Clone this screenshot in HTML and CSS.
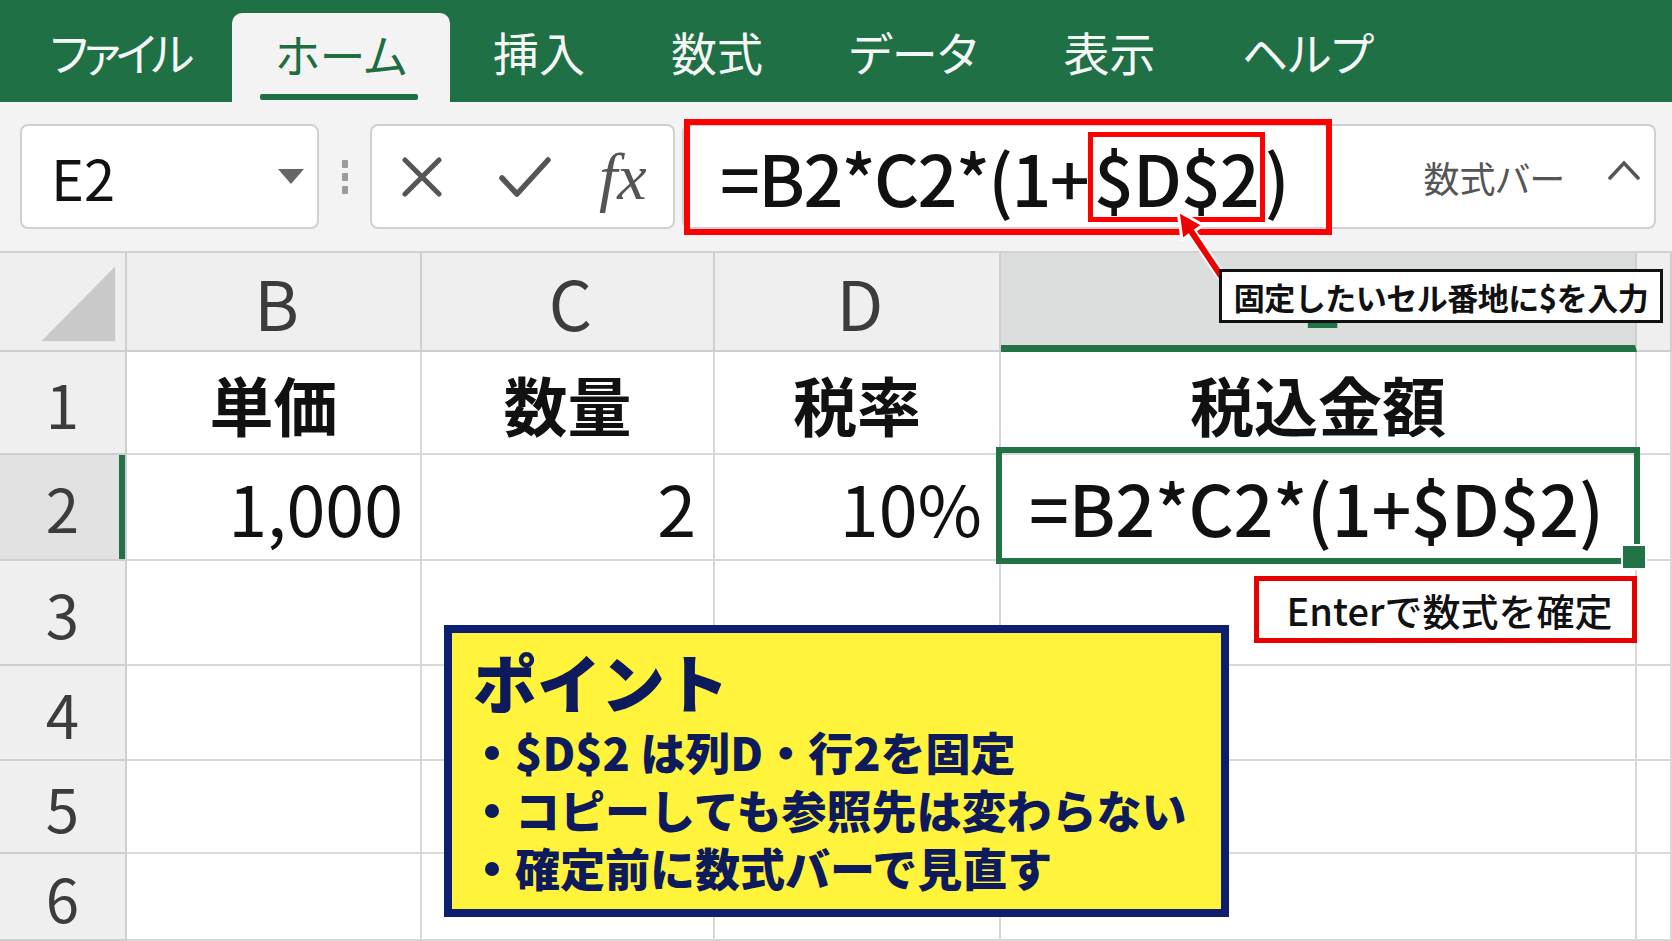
FILE: index.html
```html
<!DOCTYPE html>
<html lang="ja">
  <head>
    <meta charset="UTF-8" />
    <meta name="viewport" content="width=device-width, initial-scale=1.0" />
    <title>絶対参照で税込金額を計算</title>
    <link rel="stylesheet" href="styles.css">
  </head>

  <body>
    <div class="app">
      <nav class="ribbon-tabs">
        <span class="tab tight">ファイル</span>
        <span class="tab active">ホーム</span>
        <span class="tab">挿入</span>
        <span class="tab">数式</span>
        <span class="tab">データ</span>
        <span class="tab">表示</span>
        <span class="tab">ヘルプ</span>
      </nav>

      <div class="toolbar">
        <div class="name-box">
          <span>E2</span>
          <span class="caret"></span>
        </div>
        <div class="grip"><i></i><i></i><i></i></div>
        <div class="fn-box">
          <svg class="icon-x" width="40" height="40" viewBox="0 0 40 40">
            <path d="M3 3 L37 37 M37 3 L3 37" stroke="#555" stroke-width="5" stroke-linecap="round" />
          </svg>
          <svg class="icon-ok" width="52" height="42" viewBox="0 0 52 42">
            <path d="M3 22 L18 38 L49 4" stroke="#555" stroke-width="5.5" fill="none" stroke-linecap="round" stroke-linejoin="round" />
          </svg>
          <span class="fx">fx</span>
        </div>
        <div class="formula-box">
          <div class="formula-input"><span class="prefix">=B2*C2*(1+</span><span class="mark">$D$2</span>)</div>
          <span class="bar-label">数式バー</span>
          <svg class="chevron" width="32" height="20" viewBox="0 0 32 20">
            <path d="M2 18 L16 3 L30 18" stroke="#555" stroke-width="3.5" fill="none" stroke-linecap="round" />
          </svg>
        </div>
      </div>

      <div class="sheet">
        <div class="corner">
          <svg width="127" height="97" viewBox="0 0 127 97">
            <polygon points="42,89 117,13 117,89" fill="#c9c9c9" />
          </svg>
        </div>
        <div class="col-head">B</div>
        <div class="col-head">C</div>
        <div class="col-head">D</div>
        <div class="col-head selected">E</div>
        <div class="col-head"></div>

        <div class="row-head">1</div>
        <div class="cell label">単価</div>
        <div class="cell label">数量</div>
        <div class="cell label">税率</div>
        <div class="cell label">税込金額</div>
        <div class="cell"></div>

        <div class="row-head selected">2</div>
        <div class="cell num">1,000</div>
        <div class="cell num">2</div>
        <div class="cell num">10%</div>
        <div class="cell formula">
          =B2*C2*(1+$D$2)
          <div class="selection"><span class="handle"></span></div>
        </div>
        <div class="cell"></div>

        <div class="row-head">3</div>
        <div class="cell"></div><div class="cell"></div><div class="cell"></div><div class="cell"></div><div class="cell"></div>
        <div class="row-head">4</div>
        <div class="cell"></div><div class="cell"></div><div class="cell"></div><div class="cell"></div><div class="cell"></div>
        <div class="row-head">5</div>
        <div class="cell"></div><div class="cell"></div><div class="cell"></div><div class="cell"></div><div class="cell"></div>
        <div class="row-head">6</div>
        <div class="cell"></div><div class="cell"></div><div class="cell"></div><div class="cell"></div><div class="cell"></div>
      </div>

      <!-- 注釈 -->
      <svg class="arrow" width="70" height="80" viewBox="0 0 70 80">
        <line x1="61" y1="76" x2="31" y2="31" stroke="#fff" stroke-width="10" />
        <polygon points="18,11 43,25 22,40" fill="#e00" stroke="#fff" stroke-width="3" stroke-linejoin="round" />
        <line x1="61" y1="76" x2="31" y2="31" stroke="#e00" stroke-width="6" />
      </svg>
      <div class="callout">固定したいセル番地に$を入力</div>
      <div class="enter-note">Enterで数式を確定</div>

      <div class="point">
        <h2>ポイント</h2>
        <ul>
          <li>$D$2 は列D・行2を固定</li>
          <li>コピーしても参照先は変わらない</li>
          <li>確定前に数式バーで見直す</li>
        </ul>
      </div>
    </div>
  </body>
</html>
```

FILE: styles.css
```css
* {
  box-sizing: border-box;
}

body {
  margin: 0;
  font-family: "Noto Sans CJK JP", "Noto Sans", sans-serif;
  background-color: #fff;
  color: #111;
}

.app {
  position: relative;
  width: 1672px;
  height: 941px;
  overflow: hidden;
}

/* リボンのタブ */
.ribbon-tabs {
  display: flex;
  align-items: flex-end;
  height: 102px;
  padding-left: 7px;
  background-color: #1f7044;
}

.tab {
  position: relative;
  display: flex;
  align-items: center;
  height: 89px;
  padding: 0 43px 14px;
  font-size: 46px;
  line-height: 1;
  color: #f4f7f5;
  font-feature-settings: "palt";
}

.tab.tight {
  letter-spacing: -5px;
}

.tab.active {
  background-color: #f3f3f3;
  color: #1e6e42;
  border-radius: 10px 10px 0 0;
  padding-bottom: 10px;
}

.tab.active::after {
  content: "";
  position: absolute;
  left: 28px;
  right: 32px;
  bottom: 2px;
  height: 6px;
  border-radius: 2px;
  background-color: #1e7145;
}

/* 名前ボックスと数式バー */
.toolbar {
  display: flex;
  align-items: center;
  height: 151px;
  padding: 0 16px 0 20px;
  background-color: #f3f3f3;
  border-bottom: 2px solid #d2d2d2;
}

.name-box,
.fn-box,
.formula-box {
  display: flex;
  align-items: center;
  height: 105px;
  background-color: #fff;
  border: 2px solid #d0d0d0;
  border-radius: 8px;
}

.name-box {
  width: 299px;
  padding: 0 13px 0 29px;
  font-size: 56px;
  line-height: 1;
}

.caret {
  margin-left: auto;
  border-left: 13px solid transparent;
  border-right: 13px solid transparent;
  border-top: 15px solid #666;
}

.grip {
  display: flex;
  flex-direction: column;
  align-items: center;
  gap: 5px;
  width: 51px;
}

.grip i {
  width: 6px;
  height: 8px;
  border-radius: 1px;
  background-color: #9c9c9c;
}

.fn-box {
  width: 305px;
  padding-left: 30px;
}

.icon-ok {
  margin-left: 57px;
}

.fx {
  margin-left: 48px;
  font-family: "Liberation Serif", serif;
  font-style: italic;
  font-size: 66px;
  line-height: 1;
  color: #555;
}

.formula-box {
  flex: 1;
  margin-left: 7px;
  padding-right: 14px;
}

.formula-input {
  display: flex;
  align-items: center;
  width: 648px;
  height: 116px;
  padding-left: 30px;
  border: 6px solid #f00;
  font-size: 70px;
  font-weight: 500;
  line-height: 1;
}

.prefix {
  letter-spacing: -1.6px;
}

.mark {
  display: inline-flex;
  align-items: center;
  height: 90px;
  padding: 0 1px;
  border: 5px solid #f00;
  letter-spacing: -1px;
}

.bar-label {
  margin-left: auto;
  font-size: 36px;
  color: #555;
  font-feature-settings: "palt";
}

.chevron {
  margin-left: 43px;
  margin-bottom: 14px;
}

/* シート */
.sheet {
  display: grid;
  grid-template-columns: 127px 295px 293px 286px 636px 1fr;
  grid-template-rows: 99px 103px 106px 105px 95px 93px 1fr;
  height: 688px;
}

.sheet > div {
  display: flex;
  align-items: center;
  border-right: 2px solid #d8d8d8;
  border-bottom: 2px solid #d8d8d8;
  line-height: 1;
}

.corner,
.col-head,
.row-head {
  background-color: #efefef;
  color: #3c3c3c;
  justify-content: center;
}

.sheet > .corner,
.sheet > .col-head,
.sheet > .row-head {
  border-color: #cfcfcf;
}

.col-head {
  font-size: 68px;
  padding-left: 6px;
}

.sheet > .col-head.selected {
  background-color: #dcdddd;
  color: #217346;
  border-bottom: 7px solid #217346;
}

.row-head {
  font-size: 60px;
}

.row-head.selected {
  background-color: #e1e1e1;
  box-shadow: inset -6px 0 0 #217346;
}

.cell.label {
  justify-content: center;
  font-size: 64px;
  font-weight: 700;
}

.cell.num {
  justify-content: flex-end;
  padding-right: 17px;
  font-size: 70px;
}

.cell.formula {
  position: relative;
  padding-left: 28px;
  font-size: 70px;
  font-weight: 500;
  letter-spacing: -0.2px;
}

.selection {
  position: absolute;
  top: -8px;
  left: -5px;
  right: -5px;
  bottom: -5px;
  border: 6px solid #217346;
}

.handle {
  position: absolute;
  right: -11px;
  bottom: -10px;
  width: 22px;
  height: 22px;
  background-color: #217346;
  box-shadow: 0 0 0 2px #fff;
}

/* 注釈 */
.arrow {
  position: absolute;
  left: 1160px;
  top: 200px;
}

.callout {
  position: absolute;
  left: 1219px;
  top: 269px;
  width: 444px;
  height: 54px;
  display: flex;
  align-items: center;
  justify-content: center;
  background-color: #fff;
  border: 3px solid #111;
  font-size: 31px;
  font-weight: 700;
  letter-spacing: -0.5px;
}

.enter-note {
  position: absolute;
  left: 1254px;
  top: 576px;
  width: 383px;
  height: 67px;
  display: flex;
  align-items: center;
  justify-content: center;
  padding-left: 8px;
  background-color: #fff;
  border: 5px solid #e60000;
  font-size: 38px;
  font-weight: 500;
}

.point {
  position: absolute;
  left: 444px;
  top: 625px;
  width: 785px;
  height: 292px;
  padding: 15px 0 0 21px;
  background-color: #fff33b;
  border: 8px solid #0d1f6e;
  color: #0d1a5c;
}

.point h2 {
  margin: 0;
  font-size: 64px;
  font-weight: 900;
  line-height: 64px;
}

.point ul {
  margin: 11px 0 0;
  padding: 0;
  list-style: none;
}

.point li {
  position: relative;
  padding-left: 42px;
  font-size: 45px;
  font-weight: 900;
  line-height: 58px;
  white-space: nowrap;
}

.point li::before {
  content: "";
  position: absolute;
  left: 12px;
  top: 23px;
  width: 14px;
  height: 14px;
  border-radius: 50%;
  background-color: #0d1a5c;
}
```
